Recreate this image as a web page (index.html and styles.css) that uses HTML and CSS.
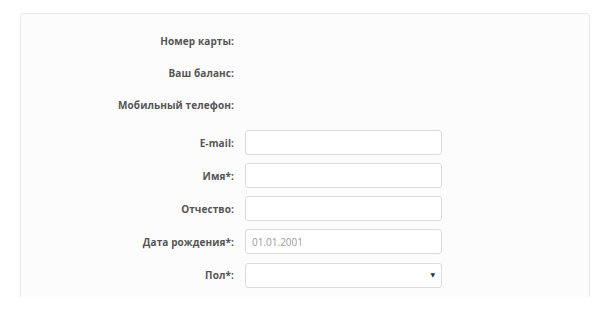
FILE: index.html
```html
<!DOCTYPE html>
<html lang="ru">
<head>
  <meta charset="UTF-8" />
  <title>Профиль</title>
  <link rel="stylesheet" href="styles.css">
</head>
<body>
  <div class="card">
    <form class="profile">
      <div class="info">
        <label class="lbl">Номер карты:</label>
        <div class="val"></div>

        <label class="lbl">Ваш баланс:</label>
        <div class="val"></div>

        <label class="lbl">Мобильный телефон:</label>
        <div class="val"></div>
      </div>

      <div class="edit">
        <label class="lbl" for="email">E-mail:</label>
        <input class="field" id="email" type="text">

        <label class="lbl" for="name">Имя*:</label>
        <input class="field" id="name" type="text">

        <label class="lbl" for="mid">Отчество:</label>
        <input class="field" id="mid" type="text">

        <label class="lbl" for="birth">Дата рождения*:</label>
        <input class="field" id="birth" type="text" placeholder="01.01.2001">

        <label class="lbl" for="sex">Пол*:</label>
        <div class="select-wrap">
          <select class="field" id="sex">
            <option></option>
            <option>Мужской</option>
            <option>Женский</option>
          </select>
          <span class="arrow">▼</span>
        </div>
      </div>
    </form>
  </div>
</body>
</html>
```

FILE: styles.css
```css
body {
  margin: 0;
  background-color: #ffffff;
  font-family: 'Open Sans', 'DejaVu Sans', sans-serif;
  color: #555;
}

.card {
  margin: 13px 0 0 20px;
  width: 570px;
  height: 284px;
  background-color: #fcfcfc;
  border: 1px solid #e8e8e8;
  border-bottom: none;
  border-radius: 4px 4px 0 0;
  box-sizing: border-box;
  padding-top: 15px;
}

.info,
.edit {
  display: grid;
  grid-template-columns: 213px 197px;
  column-gap: 11px;
}

.info {
  grid-auto-rows: 24px;
  row-gap: 8px;
  margin-bottom: 13px;
}

.edit {
  grid-auto-rows: 25px;
  row-gap: 8px;
}

.lbl {
  display: flex;
  align-items: center;
  justify-content: flex-end;
  font-size: 10px;
  font-weight: bold;
  color: #555;
  white-space: nowrap;
  letter-spacing: 0.1px;
}

.field {
  width: 100%;
  height: 25px;
  box-sizing: border-box;
  margin: 0;
  padding: 0 6px;
  border: 1px solid #dcdcdc;
  border-radius: 3px;
  background-color: #fff;
  font-family: inherit;
  font-size: 10px;
  color: #555;
  outline: none;
}

.field::placeholder {
  color: #9a9a9a;
}

.select-wrap {
  position: relative;
}

.select-wrap select {
  appearance: none;
  -webkit-appearance: none;
}

.arrow {
  position: absolute;
  right: 7px;
  top: 9px;
  font-size: 6px;
  color: #333;
  pointer-events: none;
}
```
